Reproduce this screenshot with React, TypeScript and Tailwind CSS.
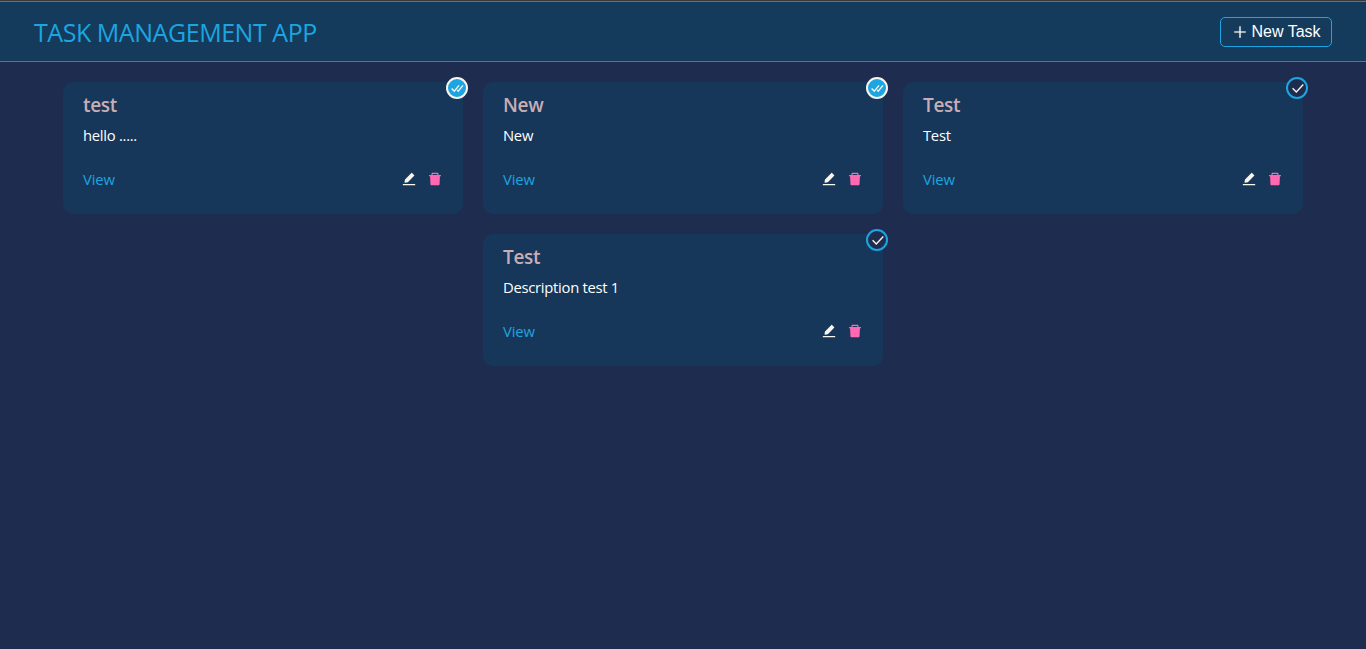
import { AiFillDelete, AiFillEdit, AiOutlinePlus } from "react-icons/ai";

type Task = { title: string; text: string; done: boolean };

const columns: Task[][] = [
  [{ title: "test", text: "hello .....", done: true }],
  [
    { title: "New", text: "New", done: true },
    { title: "Test", text: "Description test 1", done: false },
  ],
  [{ title: "Test", text: "Test", done: false }],
];

function StatusIcon({ done }: { done: boolean }) {
  return (
    <svg viewBox="0 0 18 18" className="size-[18px] shrink-0" fill="none" stroke="currentColor" strokeWidth="1.4">
      {done ? (
        <path d="M3.6 9.4 6.3 12.1 11 6.4M9.2 11.1 10.2 12.1 15 6.4" />
      ) : (
        <path d="M4.6 9.3 8.3 12.9 15.3 5.4" />
      )}
    </svg>
  );
}

function Card({ title, text, done }: Task) {
  return (
    <article className="relative flex h-[132px] w-[400px] flex-col rounded-[10px] bg-[#163759] px-5 pt-2.5">
      <button
        className={
          done
            ? "absolute -top-[5px] -right-[5px] flex size-[22px] items-center justify-center rounded-full border-2 border-[#f8f4ee] bg-[#1ca5e0] text-[#f8f4ee]"
            : "absolute -top-[5px] -right-[5px] flex size-[22px] items-center justify-center rounded-full border-2 border-[#1ca5e0] bg-[#1e2d4f] text-[#f8f4ee]"
        }
      >
        <StatusIcon done={done} />
      </button>
      <h2 className="h-[27px] text-[19px] leading-[27px] font-semibold tracking-[-0.35px] text-[#c9adb5]">{title}</h2>
      <p className="mt-[5px] h-[22px] text-[14.8px] leading-[22px] tracking-[-0.28px] text-white">{text}</p>
      <div className="mt-[22px] flex h-[22px] items-center justify-between">
        <a className="text-[14.8px] leading-[22px] tracking-[-0.1px] text-[#1ca5e0]">View</a>
        <div className="flex gap-2.5">
          <AiFillEdit className="size-4 text-[#f8f4ee]" />
          <AiFillDelete className="size-4 text-[#ff69b4]" />
        </div>
      </div>
    </article>
  );
}

export default function App() {
  return (
    <div className="min-h-screen bg-[#1e2d4f] font-['Open_Sans','Noto_Sans',sans-serif]">
      <div className="h-px bg-[#3b3839]" />
      <header className="flex h-[61px] items-center justify-between border-y border-[#68717a] bg-[#143b5c] px-[34px]">
        <h1 className="text-[25px] leading-8 tracking-[-0.45px] text-[#1ca5e0]">TASK MANAGEMENT APP</h1>
        <button className="flex h-[30px] w-28 items-center justify-center gap-[3px] rounded-[5px] border border-[#1ca5e0] pl-px font-['Liberation_Sans',sans-serif] text-base text-white">
          <AiOutlinePlus className="size-4 text-[#f8f4ee]" strokeWidth={20} />
          New Task
        </button>
      </header>
      <main className="flex justify-center gap-5 pt-5">
        {columns.map((tasks, i) => (
          <section key={i} className="flex flex-col gap-5">
            {tasks.map((task) => (
              <Card key={task.title} {...task} />
            ))}
          </section>
        ))}
      </main>
    </div>
  );
}
